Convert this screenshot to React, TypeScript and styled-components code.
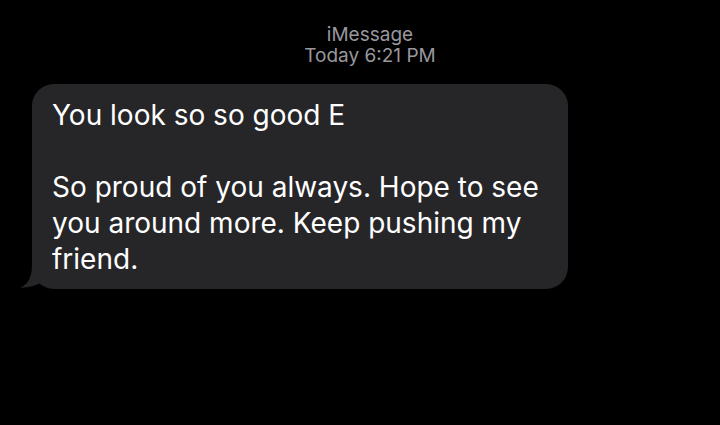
import React from "react";
import styled, { createGlobalStyle } from "styled-components";

const Global = createGlobalStyle`
  html, body { margin: 0; padding: 0; background: #000; }
  body { font-family: Inter, "Noto Sans", sans-serif; -webkit-font-smoothing: antialiased; }
`;

const Screen = styled.div`
  width: 720px;
  height: 425px;
  background: #000;
  display: flex;
  flex-direction: column;
  overflow: hidden;
`;

const Header = styled.div`
  display: flex;
  flex-direction: column;
  align-items: center;
  padding: 24px 0 0 20px;
  color: #98989e;
  font-size: 19px;
  line-height: 21px;
`;

const Thread = styled.div`
  padding: 18px 0 0 32px;
`;

const Bubble = styled.div`
  position: relative;
  width: 536px;
  box-sizing: border-box;
  background: #262629;
  border-radius: 22px;
  padding: 13px 18px 12px 20px;
  color: #fff;
  font-size: 28px;
  line-height: 36px;
`;

const Line = styled.div`
  min-height: 36px;
`;

const Tail = styled.svg`
  position: absolute;
  left: -12px;
  bottom: 0;
  width: 26px;
  height: 24px;
`;

export default function App() {
  return (
    <Screen>
      <Global />
      <Header>
        <div>iMessage</div>
        <div>Today 6:21 PM</div>
      </Header>
      <Thread>
        <Bubble>
          <Tail viewBox="0 0 26 24">
            <path
              d="M12 0 C12 12 8 19.5 0 22.5 C8 23 14 21.2 20 18.3 L22 0 Z"
              fill="#262629"
            />
          </Tail>
          <Line>You look so so good E</Line>
          <Line>&nbsp;</Line>
          <Line>So proud of you always. Hope to see</Line>
          <Line>you around more. Keep pushing my</Line>
          <Line>friend.</Line>
        </Bubble>
      </Thread>
    </Screen>
  );
}
